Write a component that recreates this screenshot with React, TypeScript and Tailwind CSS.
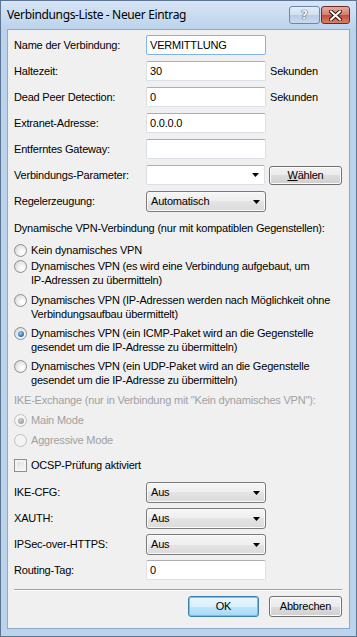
import React from 'react'

const font = "font-['Liberation_Sans',Tahoma,sans-serif]"

function TextBox({ value, focused }: { value?: string; focused?: boolean }) {
  return (
    <div
      className={`h-[20px] w-[120px] bg-white border rounded-[2px] px-[3px] leading-[18px] text-black ${
        focused ? 'border-[#7eb4ea]' : 'border-[#dbdfe6] border-t-[#abadb3]'
      }`}
    >
      {value}
    </div>
  )
}

function Arrow() {
  return (
    <svg width="7" height="4" viewBox="0 0 7 4" className="absolute right-[5px] top-1/2 -translate-y-1/2">
      <path d="M0 0 H7 L3.5 4 Z" fill="#000" />
    </svg>
  )
}

function DropDown({ value }: { value: string }) {
  return (
    <div className="relative h-[21px] w-[120px] rounded-[3px] border border-[#7a7a7a] bg-[linear-gradient(to_bottom,#f6f6f6_0%,#eeeeee_50%,#e4e4e4_50%,#dadada_100%)] shadow-[inset_0_0_0_1px_#fbfbfb]">
      <div className="absolute left-[3px] right-[18px] top-[3px] bottom-[3px] leading-[13px] px-[1px]">{value}</div>
      <Arrow />
    </div>
  )
}

function Combo() {
  return (
    <div className="relative h-[20px] w-[120px] bg-white border rounded-[2px] border-[#dbdfe6] border-t-[#abadb3]">
      <Arrow />
    </div>
  )
}

function Button({ children, def, w, h }: { children: React.ReactNode; def?: boolean; w: string; h: string }) {
  return (
    <div
      className={`${w} ${h} flex items-center justify-center rounded-[3px] border ${
        def
          ? 'border-[#3c7fb1] bg-[linear-gradient(to_bottom,#eaf6fd_0%,#d9f0fc_50%,#bee6fd_50%,#a7d9f5_100%)] shadow-[inset_0_0_0_1px_#48d4fc]'
          : 'border-[#707070] bg-[linear-gradient(to_bottom,#f2f2f2_0%,#ebebeb_50%,#dddddd_50%,#cfcfcf_100%)] shadow-[inset_0_0_0_1px_#fcfcfc]'
      }`}
    >
      {children}
    </div>
  )
}

function Radio({ checked, disabled }: { checked?: boolean; disabled?: boolean }) {
  return (
    <span
      className={`relative mt-[1px] block w-[13px] h-[13px] shrink-0 rounded-full border ${
        disabled
          ? 'border-[#c0c0c0] bg-[#f4f4f4]'
          : 'border-[#8e8f8f] bg-[radial-gradient(circle_at_65%_65%,#ffffff_10%,#e8e8e8_55%,#cdcdcd_95%)]'
      }`}
    >
      {checked && (
        <span
          className={`absolute left-[2.5px] top-[2.5px] w-[6px] h-[6px] rounded-full ${
            disabled
              ? 'bg-[radial-gradient(circle_at_40%_35%,#d0d0d0,#8a8a8a)]'
              : 'bg-[radial-gradient(circle_at_40%_35%,#8fd0fa,#1a5aa8_80%)]'
          }`}
        />
      )}
    </span>
  )
}

function RadioRow({ lines, checked, disabled, mt }: { lines: string[]; checked?: boolean; disabled?: boolean; mt: string }) {
  return (
    <div className={`${mt} flex gap-[4px] leading-[14px] ${disabled ? 'text-[#a0a0a0]' : ''}`}>
      <Radio checked={checked} disabled={disabled} />
      <div>
        {lines.map((l) => (
          <div key={l}>{l}</div>
        ))}
      </div>
    </div>
  )
}

function Row({ label, children, mt = 'mt-[6px]' }: { label: string; children: React.ReactNode; mt?: string }) {
  return (
    <div className={`${mt} flex items-center`}>
      <div className="w-[132px] shrink-0">{label}</div>
      {children}
    </div>
  )
}

export default function App() {
  return (
    <div className={`w-[357px] h-[637px] ${font} text-[11px] tracking-[-0.2px] text-black bg-[#bcd3ec] border border-[#5d7593] flex flex-col overflow-hidden`}>
      {/* title bar */}
      <div className="h-[28px] shrink-0 relative flex items-center pl-[6px] bg-[linear-gradient(to_bottom,#d7e5f5,#bcd3ec)]">
        <span className="font-['Noto_Sans',sans-serif] text-[12px] tracking-[-0.35px] text-black">Verbindungs-Liste - Neuer Eintrag</span>
        <div className="absolute right-[6px] top-[5px] flex gap-[1px]">
          <div className="w-[31px] h-[18px] rounded-[3px] border border-[#6d87a8] bg-[linear-gradient(to_bottom,#e3ecf7_0%,#d1dff0_50%,#b7cbe5_50%,#c9d9ee_100%)] flex items-center justify-center">
            <span className="font-['DejaVu_Sans',sans-serif] font-bold text-[12px] leading-none text-[#f4f4f4] [text-shadow:0_0_1px_#2b3d55,0_0_1px_#2b3d55]">?</span>
          </div>
          <div className="w-[29px] h-[18px] rounded-[3px] border border-[#6b2a23] bg-[linear-gradient(to_bottom,#e7aa9e_0%,#d47c6c_50%,#c44a37_50%,#d8806a_100%)] flex items-center justify-center">
            <svg width="13" height="11" viewBox="0 0 13 11">
              <path d="M2 1.5 L11 9.5 M11 1.5 L2 9.5" stroke="#3a1410" strokeWidth="4" strokeLinecap="square" />
              <path d="M2 1.5 L11 9.5 M11 1.5 L2 9.5" stroke="#ffffff" strokeWidth="2" strokeLinecap="square" />
            </svg>
          </div>
        </div>
      </div>

      {/* client area */}
      <div className="mx-[6px] mb-[7px] h-[600px] border border-[#8ea9cb] bg-[#f0f0f0] pl-[6px] pr-[7px] pt-[5px]">
        <Row label="Name der Verbindung:" mt="mt-0">
          <TextBox value="VERMITTLUNG" focused />
        </Row>
        <Row label="Haltezeit:">
          <TextBox value="30" />
          <span className="ml-[4px]">Sekunden</span>
        </Row>
        <Row label="Dead Peer Detection:">
          <TextBox value="0" />
          <span className="ml-[4px]">Sekunden</span>
        </Row>
        <Row label="Extranet-Adresse:">
          <TextBox value="0.0.0.0" />
        </Row>
        <Row label="Entferntes Gateway:">
          <TextBox />
        </Row>
        <Row label="Verbindungs-Parameter:">
          <Combo />
          <div className="ml-[4px]">
            <Button w="w-[73px]" h="h-[19px]">
              <span>
                <span className="underline">W</span>ählen
              </span>
            </Button>
          </div>
        </Row>
        <Row label="Regelerzeugung:">
          <DropDown value="Automatisch" />
        </Row>

        <div className="mt-[9px] leading-[14px]">Dynamische VPN-Verbindung (nur mit kompatiblen Gegenstellen):</div>
        <RadioRow mt="mt-[8px]" lines={['Kein dynamisches VPN']} />
        <RadioRow mt="mt-[2px]" lines={['Dynamisches VPN (es wird eine Verbindung aufgebaut, um', 'IP-Adressen zu übermitteln)']} />
        <RadioRow mt="mt-[6px]" lines={['Dynamisches VPN (IP-Adressen werden nach Möglichkeit ohne', 'Verbindungsaufbau übermittelt)']} />
        <RadioRow mt="mt-[5px]" checked lines={['Dynamisches VPN (ein ICMP-Paket wird an die Gegenstelle', 'gesendet um die IP-Adresse zu übermitteln)']} />
        <RadioRow mt="mt-[5px]" lines={['Dynamisches VPN (ein UDP-Paket wird an die Gegenstelle', 'gesendet um die IP-Adresse zu übermitteln)']} />

        <div className="mt-[6px] leading-[14px] text-[#a0a0a0]">IKE-Exchange (nur in Verbindung mit "Kein dynamisches VPN"):</div>
        <RadioRow mt="mt-[6px]" checked disabled lines={['Main Mode']} />
        <RadioRow mt="mt-[6px]" disabled lines={['Aggressive Mode']} />

        <div className="mt-[11px] flex gap-[4px] leading-[14px]">
          <span className="mt-[1px] block w-[13px] h-[13px] border border-[#8e8f8f] bg-[linear-gradient(135deg,#dcdcdc,#fbfbfb)] shadow-[inset_0_0_0_2px_#f4f4f4]" />
          <span>OCSP-Prüfung aktiviert</span>
        </div>

        <Row label="IKE-CFG:" mt="mt-[10px]">
          <DropDown value="Aus" />
        </Row>
        <Row label="XAUTH:" mt="mt-[5px]">
          <DropDown value="Aus" />
        </Row>
        <Row label="IPSec-over-HTTPS:" mt="mt-[5px]">
          <DropDown value="Aus" />
        </Row>
        <Row label="Routing-Tag:" mt="mt-[5px]">
          <TextBox value="0" />
        </Row>

        <div className="mt-[9px] h-[2px] border-t border-[#a0a0a0] border-b border-b-white" />

        <div className="mt-[5px] flex justify-end gap-[10px]">
          <Button def w="w-[71px]" h="h-[21px]">
            OK
          </Button>
          <Button w="w-[73px]" h="h-[21px]">
            Abbrechen
          </Button>
        </div>
      </div>
    </div>
  )
}
